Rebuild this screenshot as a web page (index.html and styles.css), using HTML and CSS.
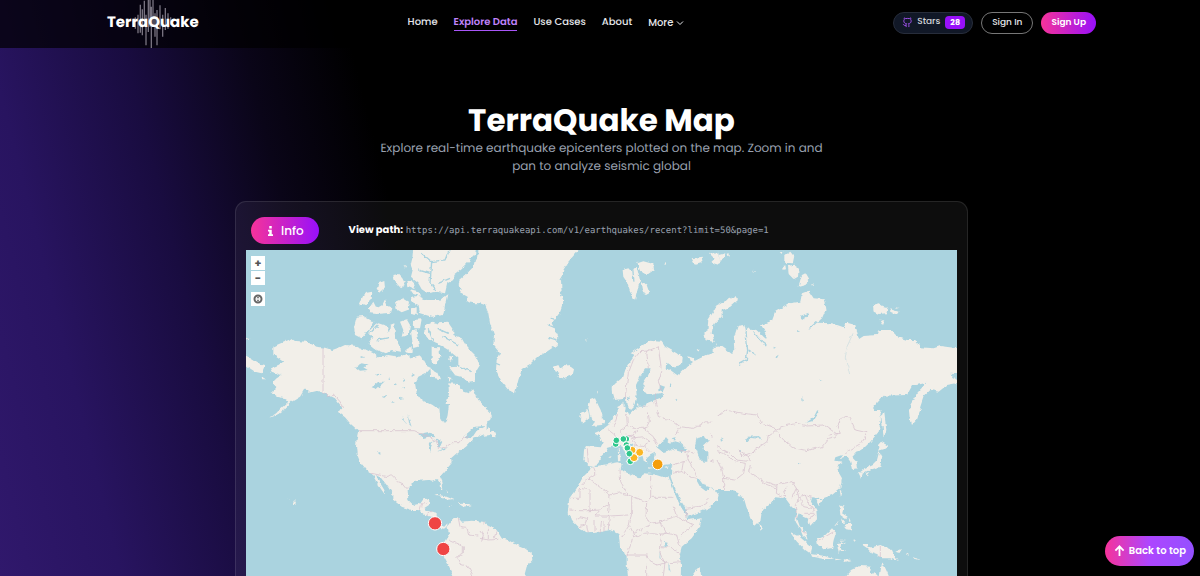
FILE: index.html
```html
<!DOCTYPE html>
<html lang="en">
  <head>
    <meta charset="utf-8">
    <title>TerraQuake Map</title>
    <meta name="viewport" content="width=device-width, initial-scale=1">
    <link rel="stylesheet" href="styles.css">
  </head>
  <body>
    <header class="header">
      <div class="header-inner">
        <a class="logo" href="#">
          <svg class="logo-wave" viewBox="0 0 120 144" aria-hidden="true">
            <path d="M3 58v22M10 52v34M18 44v56M25 14v84M31 28v78M37 2v78M42 44v92M49 0v96M54 0v80M58 20v124M63 0v80M69 40v70M75 30v106M84 16v72M92 44v66M100 24v66M108 40v46M116 52v22"/>
          </svg>
          <span>TerraQuake</span>
        </a>
        <nav class="nav">
          <a href="#">Home</a>
          <a class="active" href="#">Explore Data</a>
          <a href="#">Use Cases</a>
          <a href="#">About</a>
          <button class="nav-more" type="button">More
            <svg viewBox="0 0 8 8" aria-hidden="true"><path d="M1 2.5l3 3 3-3"/></svg>
          </button>
        </nav>
        <div class="actions">
          <a class="stars" href="#">
            <svg viewBox="0 0 24 24" aria-hidden="true"><path d="M15 22v-4a4.8 4.8 0 0 0-1-3.500c3 0 6-2 6-5.500.1-1.300-.3-2.500-1-3.500.3-1.200.3-2.300 0-3.500 0 0-1 0-3 1.500-2.600-.5-5.400-.5-8 0C6 2 5 2 5 2c-.3 1.200-.3 2.300 0 3.500A5.400 5.400 0 0 0 4 9c0 3.500 3 5.500 6 5.500-.4.500-.7 1.100-.9 1.700-.1.600-.1 1.200-.1 1.800v4M9 18c-4.500 2-5-2-7-2"/></svg>
            <span>Stars</span>
            <span class="count">28</span>
          </a>
          <button class="btn-outline" type="button">Sign In</button>
          <button class="btn-fill" type="button">Sign Up</button>
        </div>
      </div>
    </header>

    <main class="page">
      <section class="intro">
        <h1>TerraQuake Map</h1>
        <p>Explore real-time earthquake epicenters plotted on the map. Zoom in and pan to analyze seismic global</p>
      </section>

      <section class="card">
        <div class="card-top">
          <button class="info" type="button">
            <svg viewBox="0 0 6 12" aria-hidden="true"><path d="M1.500 0h3v3h-3zM0 4.500h4.500v5.500H6v2H0v-2h1.500V6.500H0z"/></svg>
            Info
          </button>
          <p class="path"><strong>View path:</strong> <code>https://api.terraquakeapi.com/v1/earthquakes/recent?limit=50&amp;page=1</code></p>
        </div>

        <div class="map">
          <svg class="world" viewBox="3 0 2133 1080" preserveAspectRatio="xMidYMin slice" role="img" aria-label="World map">
            <defs>
              <filter id="coast" x="0" y="0" width="100%" height="100%" color-interpolation-filters="sRGB">
                <feTurbulence type="fractalNoise" baseFrequency="0.07" numOctaves="2" seed="4"/>
                <feDisplacementMap in="SourceGraphic" scale="12" xChannelSelector="R" yChannelSelector="G"/>
              </filter>
            </defs>
            <g filter="url(#coast)">
              <!-- keeps the filter region equal to the whole map -->
              <path class="sea" d="M-20-20H2160V1100H-20z"/>

              <!-- Arctic Canada, Alaska -->
              <g>
                <path class="land" d="M505-9L502 25 497 45 503 60 498 80 508 90 520 100 530 118 548 130 575 125 600 130 607 100 625 90 625 75 650 55 665 40 690 15 695-9z"/>
                <path class="land" d="M725-9L705 12 690 30 685 50 662 75 645 90 640 105 650 115 645 130 665 140 665 155 690 160 725 158z"/>
                <path class="land" d="M498 140L520 138 545 150 585 150 607 132 600 165 595 195 560 200 525 190 520 165 500 155z"/>
                <path class="land" d="M85 290L100 283 140 266 150 273 185 275 215 290 240 293 262 300 285 292 300 285 330 287 345 295 365 300 385 310 400 322 430 315 460 320 485 312 500 325 530 318 545 345 560 352 545 368 520 380 510 400 515 430 530 450 560 465 580 480 585 500H300L290 470 270 445 240 430 215 422 190 428 180 415 165 440 140 455 115 480 85 500 100 482 130 455 120 445 95 440 80 430 95 415 80 400 95 385 110 375 80 365 75 355 100 345 115 335 85 315z"/>
                <path class="land" d="M0 315L25 330 40 340 60 345 50 370 30 365 0 345zM48 382l18 6-14 0zM3 260l14 4-14 6z"/>
                <path class="land" d="M610 400L640 402 655 425 670 430 685 418 700 450 725 475V500H610L605 460 612 430z"/>
                <path class="land" d="M540 225L560 215 580 220 610 218 625 240 625 255 650 265 665 290 690 315 705 345 690 370 690 395 672 398 650 380 630 375 612 352 640 350 640 325 610 300 590 288 570 280 545 262 538 245z"/>
                <path class="land" d="M370 245L385 230 400 220 425 228 432 250 435 225 448 220 450 260 465 285 468 305 440 300 420 310 395 300 370 280 382 262zM335 200L355 198 385 215 375 235 350 265 330 255 327 230z"/>
                <path class="land" d="M372 175L385 155 395 175 412 165 420 148 428 168 442 175 438 188 395 192 375 190zM342 162L350 140 365 128 382 125 380 145 365 160 350 168zM395 120L400 100 418 93 420 115 405 128zM445 75L460 72 472 85 482 105 468 115 450 95zM450 155L475 145 492 155 488 180 470 187 455 178zM498 175L515 172 515 195 498 192zM487 92L505 95 512 118 490 108zM495 118l25 6 5 14-20-6zM476 45l8 4-4 8z"/>
                <path class="land" d="M465 215L485 208 495 225 490 255 470 260 475 240zM505 210L530 208 525 235 508 235zM498 245L515 240 522 290 505 295zM485 292L500 292 500 308 484 308zM560 290L582 292 586 320 575 345 560 335zM556 355L580 368 588 388 570 385 558 378zM610 318l15 2-4 12-10-4zM608 380l12 4-8 8z"/>
                <path class="creek" d="M530 10L560 35 600 30 612 0M560 35L555 100 572 120M555 70L520 60M580 100L615 85M550 235L565 275M575 235L610 250M595 260L640 285M645 350L680 365M400 225L375 250M395 270L435 262"/>
                <path class="lake" d="M330 350L350 340 372 345 355 352 368 360 345 362zM380 412L400 395 418 395 395 417zM412 438l14-4-12 10zM395 370l12 4-12 3zM435 380l3 10-4 0zM475 385l8 8-8 4zM500 372l10 6-10 2zM450 400l6 3-6 3zM470 415l10-6 0 6zM440 452l6 5-6 2zM350 318l12 4-12 2zM465 440l12 5-12 2zM520 475l8 5-8 4z"/>
                <path class="border" d="M234 292V428L245 432 255 440 265 432 285 455 300 480"/>
              </g>

              <!-- North and Central America -->
              <g transform="translate(0 480)">
                <path class="land" d="M278 5L300 22 315 40 340 62 335 85 333 110 335 130 345 155 365 180 380 190 390 208 400 225 410 240 420 254 418 240 403 215 393 195 405 200 425 225 445 255 445 270 470 290 500 300 520 300 540 315 560 320 572 330 582 345 598 350 607 340 607 352 625 328 638 322 650 335 680 332 715 335 725 345V600H640L625 498 608 460 590 425 598 395 612 372 607 352 596 356 578 352 565 330 575 325 575 308 545 302 537 295 552 285 553 265 535 268 525 282 505 285 490 270 488 240 500 220 520 212 550 210 565 212 578 206 587 220 588 235 595 240 592 215 585 200 600 182 620 160 618 145 640 125 660 110 675 95 700 80 725 70V0L560-10H300z"/>
                <path class="land" d="M568 257L580 254 605 260 628 270 608 272 590 260zM638 280L655 278 680 286 655 290zM608 288l14 1-12 2zM145 276l6-2 2 6-6 3zM20 38l16-4M70 26L95 10 120-2 100 12zM130 266l4 2-3 1zM605 240l4 8-3 1z"/>
                <path class="lake" d="M582-18H612L608 15 602 38 586 28zM523 72L540 68 555 65 572 82 550 80 535 84zM552 98L572 88 562 96 556 125 550 115zM574 85L592 95 585 110 578 115zM576 124L600 115 605 110 600 120zM472 18L485 45 478 42zM488 15L500 50 492 42zM400 124l6 0 0 8-5-2zM655 80L690 50 720 48 695 62 680 85zM680 88L705 78 720 85 690 96z"/>
                <path class="border" d="M342 62H508L530 72 548 78 575 95 580 115 600 112 622 98 645 98 655 82 670 78M380 190L425 200 440 195 460 215 475 222 487 237M525 300L530 283 545 280M545 315L560 302M640 325L645 350 665 352 672 375 700 378 720 362M612 390L655 410 655 430 635 440 645 462 670 470 685 498M715 335L705 362"/>
              </g>

              <!-- Greenland, Iceland, Scandinavia -->
              <g transform="translate(705 0)">
                <path class="land" d="M-5-9H304L285 12 265 35 250 60 243 90 245 130 250 155 238 190 215 220 235 260 230 285 200 305 175 320 150 345 125 360 115 390 105 430 85 420 65 395 48 360 50 330 60 310 40 285 42 255 30 220 25 190 15 165-5 158z"/>
                <path class="land" d="M222 350L235 345 240 355 265 345 282 358 278 375 250 385 232 378 238 368 222 362zM428 60L445 55 452 62 470 50 480 90 465 150 450 125 440 95 430 80zM472 40L490 34 520 42 522 60 500 75 480 62zM485 92L500 105 507 125 495 132 488 115zM552 42l10-2-2 8zM635 25L665 20 668 38 645 45zM690 12L715 5 718 45 695 38 705 28zM315 268l6 2-4 2zM352 422l4 3-4 6z"/>
                <path class="land" d="M725 165L700 185 685 210 682 240 670 255 680 272 705 275 695 250 700 225 725 200zM650 298l8 0-2 10zM708 280l12 10-10-4z"/>
                <path class="land" d="M395 410L430 380 440 350 465 315 452 310 480 290 510 272 545 275 555 290 590 310 608 325 605 345 580 350 562 338 560 355 590 377 605 365 625 345 635 340 625 315 640 320 645 332 680 315 700 308 725 310V510H478L490 480 500 460 530 448 550 440 548 428 510 435 492 425 490 400 505 375 512 355 495 355 480 380 468 405 470 435 462 468 450 480 440 465 437 440 425 448 402 450 396 430z"/>
                <path class="land" d="M412 468L430 458 432 480 440 500H415zM330 450L345 445 352 460 362 480 368 500H330L325 470zM303 490L322 480 328 500H300zM0 470L20 485 25 500H-5zM470 465l6-4-2 12z"/>
                <path class="lake" d="M540 405L555 410 548 425 538 420zM568 398l8 12-6 6zM440 438l10 2-4 10zM585 440l8 8-4 2z"/>
                <path class="creek" d="M250 75L240 90M252 120L238 135M235 210L212 205M230 235L205 225M232 270L205 262M60 345L48 340M458 55L462 95"/>
                <path class="border" d="M435 450L440 405 445 370 460 330 480 305 500 303 505 355M500 303L520 295 535 290 540 330 545 365 535 395 545 420M530 430L525 455 530 475 550 495M490 470L530 475M480 490L510 480"/>
              </g>

              <!-- Atlantic, Europe, Africa -->
              <g transform="translate(705 480)">
                <path class="land" d="M-5 0L20 0 35 15 35 28 10 40-5 40zM10 78L30 45 30 62 48 68 45 82 30 75zM-5 335L20 345 50 360 65 385 85 390 100 400 130 412 155 430 157 450 140 470 132 500V600H-5z"/>
                <path class="land" d="M325-5H355L360 15 375 35 365 45 335 48 345 35 335 25 335 10zM305 10L325 3 328 25 310 40 303 30z"/>
                <path class="land" d="M725-10H475L450 12 435 5 437-10H415L412 15 400 18 385 45 365 60 342 70 360 80 368 100 362 112 318 108 312 120 310 150 325 165 342 168 355 160 362 140 378 125 385 113 405 108 422 105 432 122 450 140 465 155 468 145 478 146 455 125 440 105 452 98 470 120 487 135 492 155 502 162 500 145 512 135 525 128 522 145 530 160 550 165 576 162 572 200 582 230 600 268 620 300 620 320 650 310 690 292 712 270 716 255 705 240 690 232 678 244 660 230 648 208 655 205 670 225 690 232 725 240z"/>
                <path class="land" d="M330 170L370 165 415 157 425 160 422 180 445 190 465 200 480 205 490 190 520 192 545 200 565 198 575 225 590 265 605 295 620 315 625 330 665 325 660 350 635 385 605 410 600 430 603 470 600 600H455L440 460 440 440 420 410 418 385 415 372 390 360 350 368 320 370 300 355 280 335 263 310 268 265 290 235 305 205 325 185z"/>
                <path class="land" d="M630 505L650 478 660 468 664 505zM413 113h6v15h-5zM413 132h8v22h-7zM438 152L456 150 452 162zM505 172l20 2-20 2zM553 174l14-5-8 8zM385 142l10-4-4 6z"/>
                <path class="lake" d="M530 112L545 95 558 85 570 98 580 92 600 98 622 118 605 126 575 118 548 126zM575 85L590 80 585 92zM650 85L670 80 688 90 670 105 668 120 682 128 682 155 668 155 655 135 645 105zM552 397L566 398 562 410 552 406zM540 425L542 455 538 440zM565 455L572 490 566 480z"/>
                <path class="border" d="M385 60L405 75 400 95 410 105M412 15L400 50M440 15L442 45 460 55 500 55M505 10L508 35 495 60 520 80M442 45L420 60 430 80 460 75 470 60M530 0L535 20 575 30 600 50 585 75M455 85L490 80 510 95 490 110 465 105 455 85M520 80L530 105M322 115L325 160M495 110L510 125M440 75L470 85M600 120L620 125 645 130M578 165L610 155 625 150 620 130M610 155L605 185 630 200 648 205M578 190L605 185M620 320L618 295 650 290 680 280 685 265M625 150L640 175 650 200M600 50L640 55 680 35 720 40M690 75L720 85M690 150L720 160"/>
                <path class="border" d="M340 170L348 190 325 205 305 225M325 205L390 255 388 280 360 300 330 302 330 240 300 235M390 255L420 248 445 255 422 215 420 180M445 255L500 275 512 262 512 195M512 262H580M500 275L498 320 510 340 540 335 585 320M455 260L455 310 448 345M388 280L385 318 345 318 360 300M385 318L445 315M360 370L365 330M345 365L345 330M372 365V332M385 360L388 320M270 265L300 265 300 235M268 300L300 302 330 302M285 330L300 320 320 325 315 345 300 350M320 345L325 370M448 345L425 380M448 345L460 370 510 345M460 370L455 395 440 440M455 375L475 380 490 370 520 368 545 372 540 430 555 460 530 465 510 455 500 435 470 435 440 435M540 335L560 370 590 375 600 410M560 370L545 372M580 290L590 320 640 345 600 375M545 410L570 412 600 430M540 450L570 458 603 455M555 460L550 498M500 460L500 498"/>
                <path class="border" d="M0 360L10 375 5 395M25 350L25 390M50 362L42 385M0 385L25 390 60 388"/>
              </g>

              <!-- Siberia -->
              <g transform="translate(1416 0)">
                <path class="land" d="M-5 170L30 150 55 138 63 150 40 170 15 180-5 200zM205 15L220 5 232 20 228 40 205 38zM195 48l10-2 2 12-10 2zM213 48L230 44 245 55 243 80 230 88 215 72zM245 110L255 75 265 70 278 92 265 105zM5 15L25 10 20 30 5 32zM28 12l10-2 0 10zM188 6l8 0-2 6zM106 62l8 2-6 4zM283 102l8 2-6 4z"/>
                <path class="land" d="M468 165L485 160 498 168 512 172 508 190 485 192 470 185zM520 178L545 185 540 193 525 190zM487 208L502 215 498 226zM535 172l10 2-8 2z"/>
                <path class="land" d="M-10 290L15 290 45 312 52 305 50 265 62 228 82 225 88 250 92 235 118 240 145 265 148 250 132 225 165 212 175 185 220 160 250 155 255 130 275 122 290 145 320 148 328 175 315 205 300 218 345 220 380 232 390 218 415 225 425 268 440 258 480 255 485 240 520 240 545 262 570 270 595 270 610 292 650 295 670 288 745 298V395L690 405 665 425 640 420 620 440 610 470 600 510H578L580 465 600 430 628 398 612 402 585 408 570 435 500 437 470 470 455 510H-10z"/>
                <path class="creek" d="M87 245L92 300 88 330 65 343M95 300L118 315M108 245L135 275 148 285M130 240L148 265M275 238L300 215"/>
                <path class="lake" d="M250 198L275 188 270 200 255 210zM170 290l8 4-8 2zM175 320l10-6-6 12zM308 390l8 2-6 4zM240 240l6 4-6 2zM255 440l6 14-4 0zM295 490l8-14 2 10z"/>
                <path class="border blue" d="M408 250L390 290 385 325 398 372"/>
                <path class="border" d="M10 492L70 482 85 495"/>
                <path class="sea" d="M700 368l30 2v20l-20-8zM712 385l20-2v14z"/>
              </g>

              <!-- Asia, Pacific -->
              <g transform="translate(1416 480)">
                <path class="land" d="M-10 0H455L490 0 492 30 485 65 460 95 435 120 420 125 405 142 418 155 420 175 405 178 400 155 388 138 372 145 375 135 355 142 352 152 378 155 362 165 362 182 375 205 370 235 345 255 310 268 285 262 282 275 298 300 300 325 280 347 272 325 255 318 245 310 240 325 248 348 265 365 272 390 258 378 248 355 236 335 238 300 225 292 205 265 175 262 165 275 135 300 130 335 115 350 100 325 88 290 80 262 62 258 65 245 40 240-10 240z"/>
                <path class="land" d="M575-5H612L600 25 585 42 578 20zM492 15L502 10 508 60 500 85 497 50zM483 105L492 95 515 108 500 118 485 122zM487 123L496 140 490 170 465 178 440 190 430 186 445 175 465 165 480 150zM423 185L438 190 432 204zM445 190l12-4-8 10zM368 240L377 243 372 262zM298 270l16 0-8 16zM128 340L138 355 130 362zM-5 250l8 4-2 16-6 0z"/>
                <path class="land" d="M367 285L380 290 375 310 392 320 388 328 370 315zM380 345L402 338 403 360 390 358zM375 325l10 12-6 2zM395 322l6 12-4 2zM352 348l14-18-8 16zM218 365L245 378 285 412 282 432 265 420 240 395zM282 432L320 437 352 447 320 447 285 440zM355 446l20 2-20 3zM380 448l24 2-20 6zM300 385L325 375 345 355 357 368 350 390 345 415 320 418 303 405zM360 402L388 398 370 408 384 425 368 420 365 430zM368 392l20 0-18 3zM410 385l6 10-6 4zM432 402L450 402 452 412 465 412 490 405 525 420 532 435 545 456 520 445 495 445 480 432 460 425 450 414zM535 425l20-8-8 12zM568 430l12 8-12-4zM590 440l18 10-12-2z"/>
                <path class="land" d="M382 505L405 480 430 468 462 470 460 485 488 500 495 455 502 468 512 490 520 510V600H382z"/>
                <path class="lake" d="M268 38L290 22 302-2 304 10 290 32zM88 88L95 80 125 78 135 86 100 84 90 95zM10 85l8 6-6 4zM65 122l10-2-4 6zM245 157l6 3-5 3z"/>
                <path class="border" d="M0 20L25 0 80 10 120 15 135 40 165 50 175 62 200 48 240 40 270 48 320 45 360 72 355 80 335 85 315 110 270 122 225 112 195 85 175 62M335 75L370 70 360 50 375 20 400 25 415 60 450 68 435 98 385 128M175 62L155 75 150 95 115 118 95 140M0 110L40 130 60 150 100 155 95 140 65 120 75 140 120 120M0 125L20 130 55 155 85 160 80 190 55 210 20 205 15 180 0 150M20 205L20 240M100 165L95 185 120 200 130 210 175 225 225 215 238 235 225 262M130 210L140 220 180 235M180 225L178 250 200 262M210 230L200 245 208 262M238 235L245 260 265 255 285 262M245 265L235 290 240 325M250 265L260 290 285 295 292 315 275 325M262 310H290M265 255L275 280 292 300M250 360L265 370M305 390L325 380 350 365M490 408V442"/>
              </g>
            </g>

            <!-- Epicenters -->
            <g class="quake low">
              <circle cx="1112" cy="582" r="10"/>
              <circle cx="1144" cy="567" r="10"/>
              <circle cx="1144" cy="585" r="10"/>
              <circle cx="1114" cy="571" r="10"/>
              <circle cx="1135" cy="567" r="10"/>
              <circle cx="1147" cy="594" r="10"/>
              <circle cx="1153" cy="611" r="10"/>
              <circle cx="1156" cy="634" r="10"/>
            </g>
            <g class="quake mid">
              <circle cx="1162" cy="600" r="11"/>
              <circle cx="1167" cy="623" r="12"/>
              <circle cx="1184" cy="607" r="12"/>
            </g>
            <circle class="quake low" cx="1147" cy="594" r="10"/>
            <circle class="quake low" cx="1153" cy="611" r="10"/>
            <circle class="quake strong" cx="1238" cy="643" r="16"/>
            <circle class="quake major" cx="570" cy="820" r="20"/>
            <circle class="quake major" cx="595" cy="897" r="20"/>
          </svg>

          <div class="controls">
            <div class="zoom">
              <button type="button" aria-label="Zoom in">+</button>
              <button type="button" aria-label="Zoom out">−</button>
            </div>
            <button type="button" aria-label="Reset view">
              <svg viewBox="0 0 10 10" aria-hidden="true"><circle cx="5" cy="5" r="3.500"/><path d="M3.500 4.200L5 2.500 6.500 4.200zM3.500 5.800L5 7.500 6.500 5.800z"/></svg>
            </button>
          </div>
        </div>
      </section>
    </main>

    <button class="to-top" type="button">
      <svg viewBox="0 0 12 12" aria-hidden="true"><path d="M6 11.500V1M1.500 5.500L6 1l4.500 4.500"/></svg>
      Back to top
    </button>
  </body>
</html>
```
FILE: styles.css
```css
* {
  box-sizing: border-box;
}
body {
  margin: 0;
  height: 100vh;
  overflow: hidden;
  color: #fff;
  font-family: Poppins, Inter, "Open Sans", sans-serif;
  text-rendering: geometricPrecision;
  background: linear-gradient(76deg, #30186c 0%, #281460 9%, #190c40 19%, #0a0518 28%, #000 36%) #000;
}
a {
  color: inherit;
  text-decoration: none;
}
button {
  margin: 0;
  padding: 0;
  border: 0;
  color: inherit;
  font-family: inherit;
  background: none;
  cursor: pointer;
}

/* Header */
.header {
  height: 48px;
  padding: 0 104px 0 107px;
  background: rgba(0, 0, 0, 0.7);
}
.header-inner {
  height: 100%;
  display: flex;
  align-items: center;
  justify-content: space-between;
  padding-bottom: 3px;
}
.logo {
  position: relative;
  font-size: 15px;
  font-weight: 700;
  line-height: 20px;
}
.logo span {
  position: relative;
}
.logo-wave {
  position: absolute;
  top: -13px;
  left: 25px;
  width: 40px;
  height: 48px;
  fill: none;
  stroke: #77727f;
  stroke-width: 4;
}
.nav {
  display: flex;
  align-items: center;
  gap: 16px;
  font-size: 10px;
  font-weight: 500;
  line-height: 16px;
  color: #e5e7eb;
}
.nav a {
  border-bottom: 1px solid transparent;
}
.nav .active {
  color: #c084fc;
  font-weight: 600;
  border-color: #a855f7;
}
.nav-more {
  display: flex;
  align-items: center;
  gap: 3px;
  font-size: 10px;
  font-weight: 500;
}
.nav-more svg {
  width: 8px;
  height: 8px;
  fill: none;
  stroke: currentColor;
}
.actions {
  display: flex;
  gap: 8px;
}
.stars,
.btn-outline,
.btn-fill {
  height: 22px;
  display: flex;
  align-items: center;
  border-radius: 11px;
  font-size: 9px;
  font-weight: 500;
}
.stars {
  gap: 4px;
  padding: 0 7px 0 8px;
  color: #d1d5db;
  background: #111827;
  border: 1px solid #272d3b;
}
.stars svg {
  width: 11px;
  height: 11px;
  fill: none;
  stroke: #a855f7;
  stroke-width: 2;
}
.count {
  margin-left: 1px;
  padding: 0 5px;
  border-radius: 4px;
  color: #fff;
  font-size: 8px;
  font-weight: 700;
  line-height: 13px;
  background: #9810fa;
}
.btn-outline {
  padding: 0 10px;
  color: #e5e7eb;
  border: 1px solid #777;
}
.btn-fill {
  padding: 0 10px;
  font-weight: 600;
  background: linear-gradient(90deg, #f6339a, #9810fa);
}

/* Title */
.page {
  padding: 0 232px 0 235px;
}
.intro {
  padding-top: 52px;
  text-align: center;
}
.intro h1 {
  margin: 0;
  font-size: 31px;
  font-weight: 700;
  line-height: 40px;
}
.intro p {
  max-width: 450px;
  margin: 0 auto;
  color: #99a1af;
  font-size: 12px;
  line-height: 18px;
}

/* Map card */
.card {
  margin-top: 25px;
  padding: 15px 10px 10px;
  border: 1px solid rgba(255, 255, 255, 0.1);
  border-radius: 11px;
  background: rgba(255, 255, 255, 0.05);
}
.card-top {
  display: flex;
  align-items: center;
  gap: 30px;
  padding: 0 5px;
  margin-bottom: 6px;
}
.info {
  display: flex;
  align-items: center;
  gap: 8px;
  height: 27px;
  padding: 0 15px 0 17px;
  border-radius: 14px;
  font-size: 12px;
  font-weight: 500;
  background: linear-gradient(90deg, #f6339a, #9810fa);
}
.info svg {
  width: 5px;
  height: 10px;
  fill: #fff;
}
.path {
  margin: 0;
  font-size: 10px;
  line-height: 16px;
}
.path code {
  color: #99a1af;
  font-family: "DejaVu Sans Mono", monospace;
  font-size: 9px;
}
.map {
  position: relative;
  background: #aad3df;
}
.world {
  display: block;
  width: 100%;
  aspect-ratio: 711 / 360;
}
.sea,
.lake {
  fill: #aad3df;
}
.land {
  fill: #f2efe9;
}
.creek {
  fill: none;
  stroke: #aad3df;
  stroke-width: 4;
}
.border {
  fill: none;
  stroke: #d3bccb;
  stroke-width: 2;
}
.border.blue {
  stroke: #c9dde0;
}
.quake {
  stroke: #fff;
  stroke-width: 3;
}
.low {
  fill: #2fc78c;
}
.mid {
  fill: #fbb623;
}
.strong {
  fill: #f59e0b;
}
.major {
  fill: #ef4444;
}
.controls {
  position: absolute;
  top: 6px;
  left: 5px;
  display: grid;
  gap: 7px;
}
.zoom {
  display: grid;
  gap: 1px;
}
.controls button {
  display: flex;
  align-items: center;
  justify-content: center;
  width: 14px;
  height: 14px;
  color: #555;
  font-size: 11px;
  font-weight: 700;
  line-height: 14px;
  background: #fff;
}
.controls svg {
  width: 10px;
  height: 10px;
  fill: #666;
}
.controls circle {
  fill: none;
  stroke: #666;
  stroke-width: 2;
}

.to-top {
  position: fixed;
  right: 6px;
  bottom: 10px;
  display: flex;
  align-items: center;
  gap: 4px;
  height: 30px;
  padding: 0 8px 0 9px;
  border-radius: 15px;
  font-size: 10px;
  font-weight: 600;
  background: linear-gradient(90deg, #f6339a, #ad46ff 50%, #9450ff);
}
.to-top svg {
  width: 11px;
  height: 12px;
  fill: none;
  stroke: #fff;
  stroke-width: 2;
}
```
